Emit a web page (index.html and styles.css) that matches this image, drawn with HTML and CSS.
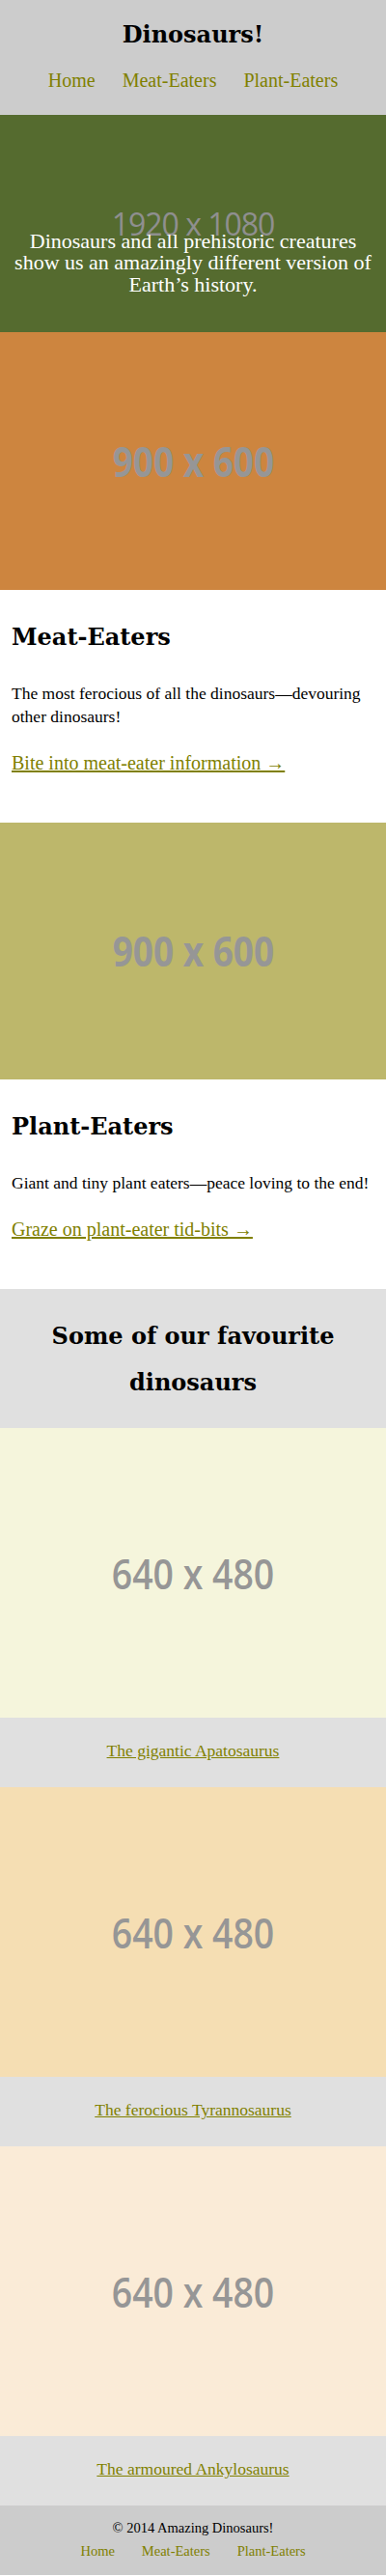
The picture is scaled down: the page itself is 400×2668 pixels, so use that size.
FILE: index.html
```html
<!DOCTYPE html>
<html lang="en">
<head>
<meta charset="utf-8">
<title>Dinosaurs!</title>
<link rel="stylesheet" href="styles.css">
</head>
<body>
<header class="masthead">
  <h1 class="site-title">Dinosaurs!</h1>
  <nav class="nav nav-main">
    <a href="#">Home</a>
    <a href="#">Meat-Eaters</a>
    <a href="#">Plant-Eaters</a>
  </nav>
</header>

<div class="hero">
  <div class="ph ph-hero"><span>1920 x 1080</span></div>
  <p class="hero-text">Dinosaurs and all prehistoric creatures show us an amazingly different version of Earth’s history.</p>
</div>

<div class="ph ph-wide ph-peru"><span>900 x 600</span></div>
<section class="info">
  <h2 class="info-title">Meat-Eaters</h2>
  <p class="info-text">The most ferocious of all the dinosaurs—devouring other dinosaurs!</p>
  <a class="info-link" href="#">Bite into meat-eater information →</a>
</section>

<div class="ph ph-wide ph-khaki"><span>900 x 600</span></div>
<section class="info">
  <h2 class="info-title">Plant-Eaters</h2>
  <p class="info-text">Giant and tiny plant eaters—peace loving to the end!</p>
  <a class="info-link" href="#">Graze on plant-eater tid-bits →</a>
</section>

<section class="favs">
  <h2 class="favs-title">Some of our favourite dinosaurs</h2>
</section>

<figure class="fav">
  <div class="ph ph-fav ph-beige"><span>640 x 480</span></div>
  <figcaption class="fav-cap"><a href="#">The gigantic Apatosaurus</a></figcaption>
</figure>
<figure class="fav">
  <div class="ph ph-fav ph-wheat"><span>640 x 480</span></div>
  <figcaption class="fav-cap"><a href="#">The ferocious Tyrannosaurus</a></figcaption>
</figure>
<figure class="fav">
  <div class="ph ph-fav ph-antique"><span>640 x 480</span></div>
  <figcaption class="fav-cap"><a href="#">The armoured Ankylosaurus</a></figcaption>
</figure>

<footer class="foot">
  <p class="copy">© 2014 Amazing Dinosaurs!</p>
  <nav class="nav nav-foot">
    <a href="#">Home</a>
    <a href="#">Meat-Eaters</a>
    <a href="#">Plant-Eaters</a>
  </nav>
</footer>
</body>
</html>
```

FILE: styles.css
```css
html, body {
  margin: 0;
  padding: 0;
}
body {
  font-family: "Liberation Serif", "Times New Roman", serif;
  color: #000;
  background: #fff;
}
a {
  color: #808000;
}

/* header */
.masthead {
  background: #cccccc;
  text-align: center;
  padding: 20px 0 24px;
}
.site-title {
  margin: 0 0 19px;
  font-family: "DejaVu Serif", serif;
  font-weight: bold;
  font-size: 24px;
  line-height: 32px;
}
.nav {
  display: flex;
  justify-content: center;
  gap: 28px;
}
.nav a {
  text-decoration: none;
}
.nav-main {
  font-size: 20px;
  line-height: 24px;
}

/* placeholders */
.ph {
  display: flex;
  align-items: center;
  justify-content: center;
  overflow: hidden;
}
.ph span {
  font-family: "Open Sans", "DejaVu Sans", sans-serif;
  color: #969696;
  white-space: nowrap;
}
.ph-hero {
  background: #556b2f;
  height: 225px;
}
.ph-hero span {
  font-size: 32px;
  line-height: 1;
  letter-spacing: -1px;
  color: #8f8f8f;
}
.ph-wide {
  height: 266.67px;
}
.ph-wide span {
  font-size: 43px;
  font-weight: 700;
  line-height: 1;
  transform: scaleX(0.86);
}
.ph-peru { background: #cd853f; }
.ph-khaki { background: #bdb76b; }
.ph-fav {
  height: 300px;
}
.ph-fav span {
  font-size: 44px;
  font-weight: 600;
  line-height: 1;
  transform: scaleX(0.85);
}
.ph-beige { background: #f5f5dc; }
.ph-wheat { background: #f5deb3; }
.ph-antique { background: #faebd7; }

/* hero */
.hero {
  display: grid;
}
.hero > * {
  grid-area: 1 / 1;
}
.hero-text {
  align-self: end;
  margin: 0;
  padding: 0 12px 38px;
  color: #fff;
  text-align: center;
  font-size: 22px;
  line-height: 22.5px;
}

/* info sections */
.info {
  padding: 33px 12px 50px;
}
.info-title {
  margin: 0 0 30px;
  font-family: "DejaVu Serif", serif;
  font-weight: bold;
  font-size: 24px;
  line-height: 32px;
}
.info-text {
  margin: 0 0 24px;
  font-size: 17.5px;
  line-height: 24px;
}
.info-link {
  display: block;
  font-size: 20px;
  line-height: 24px;
}

/* favourites */
.favs {
  background: #e0e0e0;
  padding: 25px 12px 23px;
  text-align: center;
}
.favs-title {
  margin: 0;
  font-family: "DejaVu Serif", serif;
  font-weight: bold;
  font-size: 24px;
  line-height: 48px;
}
.fav {
  margin: 0;
}
.fav-cap {
  background: #e0e0e0;
  text-align: center;
  padding: 22px 0 26px;
  font-size: 17.5px;
  line-height: 24px;
}

/* footer */
.foot {
  background: #cccccc;
  text-align: center;
  padding: 11px 0 13px;
}
.copy {
  margin: 0;
  font-size: 14.5px;
  line-height: 24px;
}
.nav-foot {
  font-size: 14.5px;
  line-height: 24px;
}
```
